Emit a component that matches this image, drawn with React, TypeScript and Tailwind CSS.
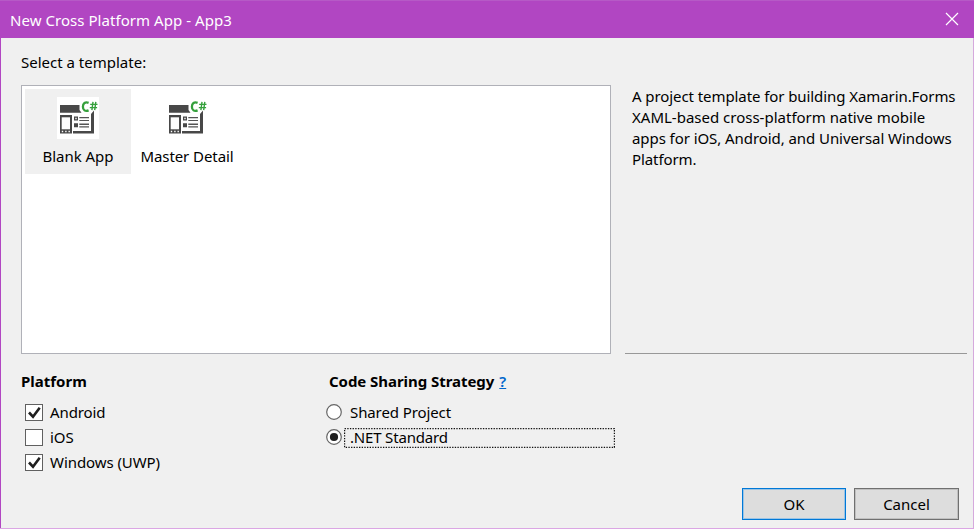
import { useState } from "react";

function TemplateIcon() {
  return (
    <svg width="42" height="42" viewBox="0 0 42 42" className="block bg-white">
      <path d="M3 8H22.5V13L24.5 15.7H3Z" fill="#484848" />
      <path d="M34 17L37 13.5V36.5H16V34H34Z" fill="#484848" />
      <path d="M3 18H15V36.5H3Z" fill="#484848" />
      <path d="M4.7 20.3H13V32.3H4.7Z" fill="#fdfdfd" />
      <path d="M4.8 33.8H6.2V35.2H4.8ZM8.2 33.8H9.6V35.2H8.2ZM11.5 33.8H12.9V35.2H11.5Z" fill="#fff" />
      <path d="M17 19.5H21V23.5H17ZM17 26.3H21V30.3H17Z" fill="#484848" />
      <path d="M18.3 20.8H19.7V22.2H18.3Z" fill="#fff" />
      <path d="M22.3 20H32V21.3H22.3ZM22.3 23H32V24.1H22.3ZM22.3 26.6H32V27.9H22.3ZM22.3 29.3H32V30.6H22.3Z" fill="#555" />
      <path d="M31.6 5.9C28.2 4.5 25.9 6.4 25.9 9.8S28.2 14.8 31.6 13.4" fill="none" stroke="#35a03c" strokeWidth="2.3" />
      <path d="M36 4.8L34.9 13.2M38.8 4.8L37.7 13.2M33.2 7.4H40.5M32.8 10.6H40.1" fill="none" stroke="#35a03c" strokeWidth="1.4" />
    </svg>
  );
}

function CheckRow({ label, initial, tracking }: { label: string; initial: boolean; tracking: string }) {
  const [on, setOn] = useState(initial);
  return (
    <div className="flex h-[25px] items-center" onClick={() => setOn(!on)}>
      <span className="h-[17px] w-[18px] shrink-0 border border-[#606060] bg-white">
        {on && (
          <svg width="16" height="15" viewBox="0 0 16 15" className="block">
            <path d="M3 7.5L7 11.7L13.7 2.7" fill="none" stroke="#1f1f1f" strokeWidth="2.6" />
          </svg>
        )}
      </span>
      <span className={"ml-[7px] whitespace-nowrap " + tracking}>{label}</span>
    </div>
  );
}

function Radio({ on }: { on: boolean }) {
  return (
    <svg width="16" height="16" viewBox="0 0 16 16" className="mb-px block shrink-0">
      <circle cx="8" cy="8" r="7.3" fill="#fff" stroke="#666" strokeWidth="1.2" />
      {on && <circle cx="8" cy="8" r="4.1" fill="#1f1f1f" />}
    </svg>
  );
}

export default function App() {
  return (
    <div className="flex h-[529px] w-[974px] flex-col overflow-hidden border-b border-[#dba6e4] bg-[#f0f0f0] font-['Noto_Sans','Open_Sans',sans-serif] text-[15px] leading-[21px] text-black">
      <header className="flex h-[38px] shrink-0 items-center justify-between border-t border-[#b65ac6] bg-[#b146c2] pr-[15px] pl-[10px] text-white">
        <span className="mt-[2px] tracking-[0.05px] whitespace-nowrap">New Cross Platform App - App3</span>
        <svg width="14" height="14" viewBox="0 0 14 14" className="mb-px">
          <path d="M1 1L13 13M13 1L1 13" stroke="#fff" strokeWidth="1.2" />
        </svg>
      </header>
      <main className="flex flex-1 flex-col border-r border-l border-r-[#d5a9dd] border-l-[#b146c2] pl-5">
        <div className="mt-[14px] h-[21px]"><span>Select a template:</span></div>
        <div className="mt-[12px] flex h-[269px]">
          <div className="flex w-[590px] items-start gap-[1px] border border-[#b0b1b8] bg-white p-[3px]">
            <div className="flex h-[85px] w-[106px] flex-col items-center bg-[#f0f0f0] pt-[8px]">
              <TemplateIcon />
              <span className="mt-[7px] tracking-[-0.05px] whitespace-nowrap">Blank App</span>
            </div>
            <div className="flex h-[85px] w-[110px] flex-col items-center pt-[8px]">
              <TemplateIcon />
              <span className="mt-[7px] tracking-[-0.08px] whitespace-nowrap">Master Detail</span>
            </div>
          </div>
          <div className="ml-[14px] w-[342px] border-b border-[#989898] pt-[1px] pl-[7px]">
            <p className="whitespace-nowrap">
              <span className="tracking-[-0.08px]">A project template for building Xamarin.Forms</span><br />
              <span>XAML-based cross-platform native mobile</span><br />
              <span className="tracking-[-0.07px]">apps for iOS, Android, and Universal Windows</span><br />
              <span className="tracking-[-0.1px]">Platform.</span>
            </p>
          </div>
        </div>
        <div className="mt-[17px] flex">
          <section className="w-[305px]">
            <h2 className="font-bold"><span>Platform</span></h2>
            <div className="mt-[8px] pl-[4px]">
              <CheckRow label="Android" initial={true} tracking="tracking-[-0.1px]" />
              <CheckRow label="iOS" initial={false} tracking="tracking-[0px]" />
              <CheckRow label="Windows (UWP)" initial={true} tracking="tracking-[-0.07px]" />
            </div>
          </section>
          <section>
            <h2 className="flex gap-[5px] pl-[3px] font-bold">
              <span className="tracking-[-0.05px]">Code Sharing Strategy</span>
              <a className="font-semibold text-[#0066cc] underline">?</a>
            </h2>
            <div className="mt-[8px]">
              <div className="flex h-[25px] items-center">
                <Radio on={false} />
                <span className="ml-[8px] tracking-[-0.1px]">Shared Project</span>
              </div>
              <div className="flex h-[25px] items-center">
                <Radio on={true} />
                <span className="relative ml-[2px] flex h-[20px] w-[271px] items-center pl-[6px] tracking-[-0.18px]">
                  .NET Standard
                  <svg width="271" height="20" viewBox="0 0 271 20" className="absolute inset-0">
                    <rect x="0.6" y="0.6" width="269.8" height="18.8" fill="none" stroke="#111" strokeWidth="1.2" strokeDasharray="1.33 1.33" />
                  </svg>
                </span>
              </div>
            </div>
          </section>
        </div>
        <footer className="mt-auto mb-[8px] flex justify-end gap-[8px] pr-[14px]">
          <button className="h-[32px] w-[104px] border border-[#0078d7] bg-[#dddddd] pt-[1px] shadow-[inset_0_0_0_1px_#9cc4e4]">OK</button>
          <button className="h-[32px] w-[105px] border border-[#707070] bg-[#dddddd] pt-[1px] shadow-[inset_0_0_0_1px_#c0c0c0]">Cancel</button>
        </footer>
      </main>
    </div>
  );
}
